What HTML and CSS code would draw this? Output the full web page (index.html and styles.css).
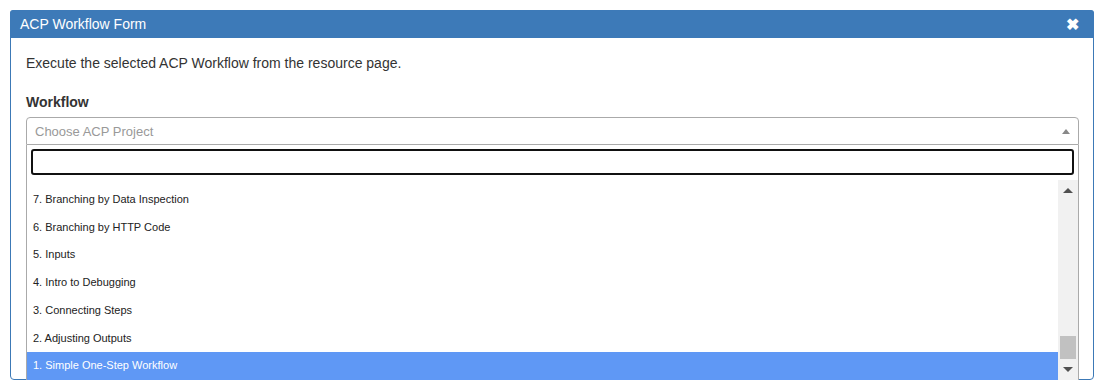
FILE: index.html
```html
<!DOCTYPE html>
<html lang="en">
<head>
  <meta charset="UTF-8">
  <title>ACP Workflow Form</title>
  <link rel="stylesheet" href="styles.css">
</head>
<body>
  <div class="modal">
    <div class="modal-header">
      <span class="modal-title">ACP Workflow Form</span>
      <span class="close">&#10006;</span>
    </div>
    <div class="modal-body">
      <p class="intro">Execute the selected ACP Workflow from the resource page.</p>
      <label class="label">Workflow</label>
      <div class="select">
        <span class="placeholder">Choose ACP Project</span>
        <span class="arrow"></span>
      </div>
      <div class="dropdown">
        <div class="search-wrap">
          <input class="search" type="text">
        </div>
        <div class="results">
          <ul class="options">
            <li>7. Branching by Data Inspection</li>
            <li>6. Branching by HTTP Code</li>
            <li>5. Inputs</li>
            <li>4. Intro to Debugging</li>
            <li>3. Connecting Steps</li>
            <li>2. Adjusting Outputs</li>
            <li class="selected">1. Simple One-Step Workflow</li>
          </ul>
          <div class="scrollbar">
            <span class="sb-up"></span>
            <span class="sb-track"><span class="sb-thumb"></span></span>
            <span class="sb-down"></span>
          </div>
        </div>
      </div>
    </div>
  </div>
</body>
</html>
```

FILE: styles.css
```css
body {
  margin: 0;
  padding: 10px 8px 0 10px;
  font-family: "Liberation Sans", Arial, sans-serif;
  font-size: 13px;
  color: #333;
  background: #fff;
}
.modal {
  width: 1084px;
  height: 370px;
  border: 1px solid #3c79b6;
  border-radius: 4px;
  box-sizing: border-box;
}
.modal-header {
  background: #3d7ab8;
  color: #fff;
  height: 28px;
  display: flex;
  align-items: center;
  justify-content: space-between;
  padding: 0 15px 0 10px;
  border-radius: 3px 3px 0 0;
  margin: -1px -1px 0 -1px;
}
.modal-title {
  font-size: 14px;
}
.close {
  font-size: 16px;
  font-weight: bold;
}
.modal-body {
  padding: 15px 14px 0 15px;
}
.intro {
  margin: 0 0 19px;
  font-size: 14px;
  line-height: 20px;
}
.label {
  display: block;
  font-weight: bold;
  font-size: 14px;
  line-height: 20px;
  margin-bottom: 5px;
}
.select {
  width: 1053px;
  height: 28px;
  border: 1px solid #aaa;
  border-radius: 4px 4px 0 0;
  box-sizing: border-box;
  display: flex;
  align-items: center;
  justify-content: space-between;
  padding: 0 8px;
}
.placeholder {
  color: #999;
  font-size: 13px;
}
.arrow {
  width: 0;
  height: 0;
  border-left: 4px solid transparent;
  border-right: 4px solid transparent;
  border-bottom: 5px solid #888;
}
.dropdown {
  position: relative;
  z-index: 2;
  background: #fff;
  border: 1px solid #aaa;
  border-top: none;
  box-sizing: border-box;
  width: 1053px;
}
.search-wrap {
  padding: 4px 4px 5px 4px;
}
.search {
  display: block;
  width: 100%;
  height: 26px;
  box-sizing: border-box;
  border: 2px solid #111;
  border-radius: 3px;
  margin: 0;
}
.results {
  display: flex;
  height: 200px;
}
.options {
  flex: 1;
  list-style: none;
  margin: 0;
  padding: 0;
  display: flex;
  flex-direction: column;
  justify-content: flex-end;
}
.options li {
  font-size: 11px;
  line-height: 15.7px;
  padding: 6px 6px;
  color: #222;
}
.options li.selected {
  background: #5f98f5;
  color: #fff;
}
.scrollbar {
  width: 20px;
  background: #f1f1f1;
  display: flex;
  flex-direction: column;
  align-items: center;
}
.sb-up, .sb-down {
  width: 0;
  height: 0;
  border-left: 5px solid transparent;
  border-right: 5px solid transparent;
  margin: 8px 0;
}
.sb-up {
  border-bottom: 5px solid #505050;
}
.sb-down {
  border-top: 5px solid #505050;
}
.sb-track {
  flex: 1;
  width: 16px;
  display: flex;
  flex-direction: column;
  justify-content: flex-end;
}
.sb-thumb {
  height: 23px;
  background: #c1c1c1;
}
```
